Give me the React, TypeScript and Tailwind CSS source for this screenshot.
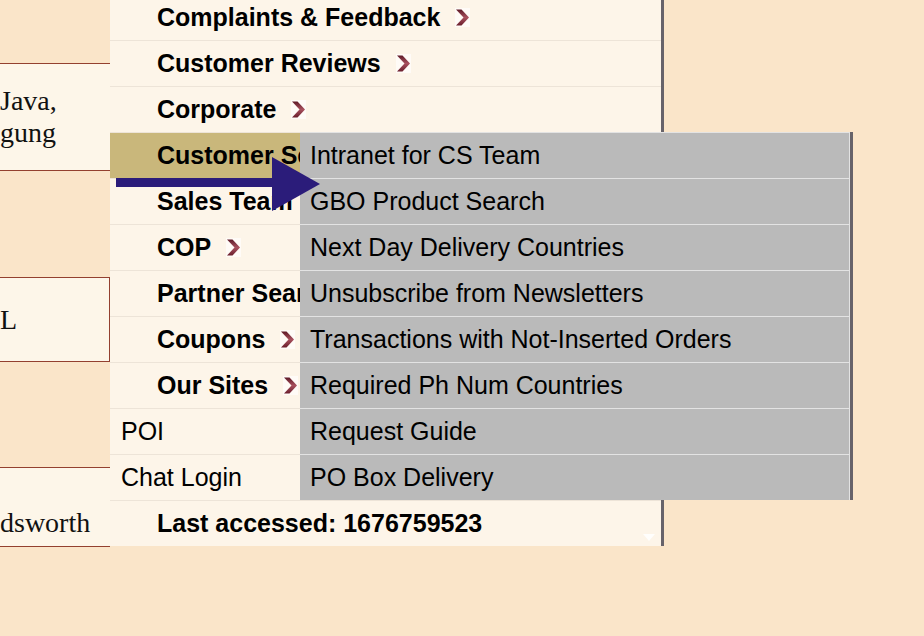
import React from "react";

const Chevron = () => (
  <span className="inline-flex ml-[15px] w-[15px] h-[19px] bg-[#fffbf7] items-center justify-center">
    <svg width="15" height="19" viewBox="0 0 15 19">
      <defs>
        <linearGradient id="chv" x1="0" y1="0" x2="0" y2="1">
          <stop offset="0" stopColor="#5e1a28" />
          <stop offset="0.5" stopColor="#a8505e" />
          <stop offset="1" stopColor="#6a1e2c" />
        </linearGradient>
      </defs>
      <polygon points="1,1.5 6.5,1.5 14,9.5 6.5,17.5 1,17.5 8.5,9.5" fill="url(#chv)" />
    </svg>
  </span>
);

type Row = { label: string; bold: boolean; chevron?: boolean; active?: boolean };

const rows: Row[] = [
  { label: "Complaints & Feedback", bold: true, chevron: true },
  { label: "Customer Reviews", bold: true, chevron: true },
  { label: "Corporate", bold: true, chevron: true },
  { label: "Customer Service", bold: true, chevron: true, active: true },
  { label: "Sales Team", bold: true, chevron: true },
  { label: "COP", bold: true, chevron: true },
  { label: "Partner Search", bold: true, chevron: true },
  { label: "Coupons", bold: true, chevron: true },
  { label: "Our Sites", bold: true, chevron: true },
  { label: "POI", bold: false },
  { label: "Chat Login", bold: false },
];

const sub = [
  "Intranet for CS Team",
  "GBO Product Search",
  "Next Day Delivery Countries",
  "Unsubscribe from Newsletters",
  "Transactions with Not-Inserted Orders",
  "Required Ph Num Countries",
  "Request Guide",
  "PO Box Delivery",
];

export default function App() {
  return (
    <div className="relative w-[924px] h-[636px] overflow-hidden bg-[#fae5c9] flex items-start">
      {/* left column */}
      <div className="w-[110px] shrink-0 flex flex-col font-['Liberation_Serif',serif] text-[28px] leading-[32px] text-[#111]">
        <div className="mt-[63px] h-[108px] border-y border-[#93402f] bg-[#fdf6e9] flex flex-col justify-center overflow-hidden">
          <div className="whitespace-nowrap">Java,</div>
          <div className="whitespace-nowrap">gung</div>
        </div>
        <div className="mt-[106px] h-[85px] border-y border-r border-[#93402f] bg-[#fdf6e9] flex flex-col justify-center overflow-hidden">
          <div className="whitespace-nowrap">L</div>
        </div>
        <div className="mt-[105px] h-[80px] border-y border-[#93402f] bg-[#fdf6e9] flex flex-col justify-center overflow-hidden">
          <div className="whitespace-nowrap">&nbsp;</div>
          <div className="whitespace-nowrap">dsworth</div>
        </div>
      </div>

      {/* main menu */}
      <div className="relative mt-[-5px] w-[554px] shrink-0 flex flex-col bg-[#fdf5e9] border-r-[3px] border-[#67636a] font-['Liberation_Sans',Arial,sans-serif] text-[25px] text-black">
        {rows.map((r) => (
          <div
            key={r.label}
            className={`h-[46px] border-b border-[#ede4d8] flex items-center whitespace-nowrap overflow-hidden ${
              r.bold ? "pl-[47px] font-bold" : "pl-[11px]"
            } ${r.active ? "bg-[#c9b77b]" : ""}`}
          >
            <span>{r.label}</span>
            {r.chevron && <Chevron />}
          </div>
        ))}
        <div className="relative h-[45px] flex items-center pl-[47px] font-bold whitespace-nowrap">
          Last accessed: 1676759523
          <svg className="absolute right-[6px] bottom-[4px]" width="12" height="8" viewBox="0 0 12 8">
            <polygon points="0,0 12,0 6,7" fill="#ffffff" opacity="0.85" />
          </svg>
        </div>
      </div>

      {/* flyout submenu */}
      <div className="absolute left-[300px] top-[132px] w-[553px] flex flex-col bg-[#bababa] border-r-[3px] border-[#67636a] font-['Liberation_Sans',Arial,sans-serif] text-[25px] text-black">
        {sub.map((s) => (
          <div
            key={s}
            className="h-[46px] border-t border-r border-[#e3e3e3] flex items-center pl-[10px] whitespace-nowrap"
          >
            {s}
          </div>
        ))}
      </div>

      {/* pointer arrow */}
      <svg
        className="absolute left-[116px] top-[155px]"
        width="206"
        height="60"
        viewBox="0 0 206 60"
      >
        <rect x="0" y="23" width="160" height="9" fill="#2b1c7a" />
        <polygon points="156,2 156,56 204,29" fill="#2b1c7a" />
      </svg>
    </div>
  );
}
